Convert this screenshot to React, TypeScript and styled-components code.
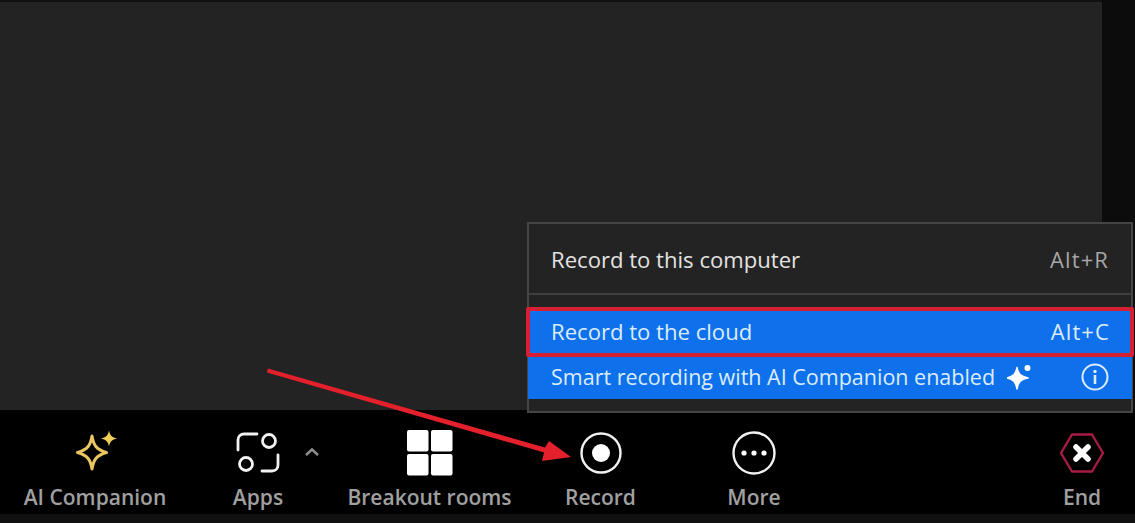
import React from 'react';
import styled, { createGlobalStyle } from 'styled-components';

const GlobalStyle = createGlobalStyle`
    html, body {
        margin: 0;
        padding: 0;
        background: #000;
        font-family: "Open Sans", "Noto Sans", "Liberation Sans", sans-serif;
    }
`;

const Page = styled.div`
    position: relative;
    width: 1135px;
    height: 523px;
    overflow: hidden;
    display: flex;
    flex-direction: column;
    background: #0b0b0b;
`;

const MeetingArea = styled.div`
    height: 410px;
    display: flex;
    padding-top: 2px;
    box-sizing: border-box;
    background: #111;
`;

const Stage = styled.div`
    flex: 1;
    background: #232323;
`;

const Gutter = styled.div`
    width: 33px;
    margin-top: -2px;
    background: #0c0c0c;
`;

const Toolbar = styled.div`
    height: 104px;
    display: flex;
    background: #000;
`;

const BottomStrip = styled.div`
    flex: 1;
    background: #101010;
`;

const ToolButton = styled.div<{ $width: number; $end?: boolean }>`
    position: relative;
    width: ${({ $width }) => $width}px;
    margin-left: ${({ $end }) => ($end ? 'auto' : '0')};
    display: flex;
    flex-direction: column;
    align-items: center;
    padding-top: 19px;
    box-sizing: border-box;
`;

const IconSlot = styled.div`
    width: 52px;
    height: 48px;
    display: flex;
    align-items: center;
    justify-content: center;
`;

const ToolLabel = styled.span`
    margin-top: 5px;
    font-size: 21px;
    line-height: 30px;
    font-weight: 600;
    color: #a0a0a0;
    white-space: nowrap;
`;

const Caret = styled.svg`
    position: absolute;
    top: 36px;
    right: 6px;
`;

const Menu = styled.div`
    position: absolute;
    left: 527px;
    top: 222px;
    width: 606px;
    height: 191px;
    box-sizing: border-box;
    display: flex;
    flex-direction: column;
    background: #232323;
    border: 2px solid #454545;
`;

const MenuRow = styled.div`
    height: 71px;
    flex-shrink: 0;
    display: flex;
    align-items: center;
    justify-content: space-between;
    box-sizing: border-box;
    padding: 0 22px;
    border-bottom: 2px solid #3f3f3f;
`;

const MenuText = styled.span`
    font-size: 22.1px;
    line-height: 28px;
    color: #e2e2e2;
    white-space: nowrap;
`;

const Shortcut = styled.span<{ $light?: boolean }>`
    font-size: 22px;
    letter-spacing: 1.1px;
    line-height: 28px;
    color: ${({ $light }) => ($light ? '#dcecff' : '#a6a6a6')};
    white-space: nowrap;
`;

const CloudRow = styled.div`
    margin: 12px -3px 0 -3px;
    height: 50px;
    flex-shrink: 0;
    box-sizing: border-box;
    display: flex;
    align-items: center;
    justify-content: space-between;
    padding: 0 20px 2px 21px;
    background: #0e71eb;
    border: 4px solid #d61f33;
    border-radius: 2px;
    position: relative;
`;

const SmartRow = styled.div`
    height: 42px;
    flex-shrink: 0;
    box-sizing: border-box;
    display: flex;
    align-items: center;
    gap: 12px;
    background: #0e71eb;
    margin: 0 -1px;
    padding: 0 23px 2px;
`;

const LightText = styled.span<{ $size: number }>`
    font-size: ${({ $size }) => $size}px;
    line-height: 28px;
    color: #dcecff;
    white-space: nowrap;
`;

const InfoIcon = styled.svg`
    margin-left: auto;
`;

const ArrowOverlay = styled.svg`
    position: absolute;
    left: 0;
    top: 0;
    pointer-events: none;
`;

const App: React.FC = () => (
    <>
        <GlobalStyle />
        <Page>
            <MeetingArea>
                <Stage />
                <Gutter />
            </MeetingArea>
            <Toolbar>
                <ToolButton $width={190}>
                    <IconSlot>
                        <svg width="48" height="48" viewBox="0 0 48 48" fill="none">
                            <path d="M21 7 C22.500 16 25 20.500 35.500 23.500 C25 26.500 22.500 31 21 40 C19.500 31 17 26.500 6.500 23.500 C17 20.500 19.500 16 21 7 Z" stroke="#e9c662" strokeWidth="3" strokeLinejoin="round" />
                            <path d="M38 1.500 C39 6.500 41 8.500 46 9.500 C41 10.500 39 12.500 38 17.500 C37 12.500 35 10.500 30 9.500 C35 8.500 37 6.500 38 1.500 Z" fill="#f2cf5b" />
                        </svg>
                    </IconSlot>
                    <ToolLabel>AI Companion</ToolLabel>
                </ToolButton>
                <ToolButton $width={136}>
                    <IconSlot>
                        <svg width="48" height="48" viewBox="0 0 48 48" fill="none" stroke="#f2f2f2" strokeWidth="2.800" strokeLinecap="round">
                            <circle cx="35" cy="12" r="6.500" />
                            <circle cx="12" cy="35" r="6.500" />
                            <path d="M23 5 H10 C6.500 5 4 7.500 4 11 V21" />
                            <path d="M44 26 V36 C44 39.500 41.500 42 38 42 H28" />
                        </svg>
                    </IconSlot>
                    <ToolLabel>Apps</ToolLabel>
                    <Caret width="16" height="12" viewBox="0 0 16 12" fill="none">
                        <path d="M2 9 L8 3.500 L14 9" stroke="#8f8f8f" strokeWidth="2.400" />
                    </Caret>
                </ToolButton>
                <ToolButton $width={207}>
                    <IconSlot>
                        <svg width="46" height="46" viewBox="0 0 46 46" fill="#fff">
                            <rect x="0" y="0" width="21.500" height="21.500" rx="2" />
                            <rect x="24" y="0" width="21.500" height="21.500" rx="2" />
                            <rect x="0" y="24" width="21.500" height="21.500" rx="2" />
                            <rect x="24" y="24" width="21.500" height="21.500" rx="2" />
                        </svg>
                    </IconSlot>
                    <ToolLabel>Breakout rooms</ToolLabel>
                </ToolButton>
                <ToolButton $width={135}>
                    <IconSlot>
                        <svg width="44" height="44" viewBox="0 0 44 44" fill="none">
                            <circle cx="22" cy="22" r="19.500" stroke="#f2f2f2" strokeWidth="2.400" />
                            <circle cx="22" cy="22" r="9" fill="#fff" />
                        </svg>
                    </IconSlot>
                    <ToolLabel>Record</ToolLabel>
                </ToolButton>
                <ToolButton $width={172}>
                    <IconSlot>
                        <svg width="46" height="46" viewBox="0 0 46 46" fill="none">
                            <circle cx="23" cy="23" r="20.500" stroke="#f2f2f2" strokeWidth="2.400" />
                            <circle cx="13" cy="23" r="2.600" fill="#fff" />
                            <circle cx="23" cy="23" r="2.600" fill="#fff" />
                            <circle cx="33" cy="23" r="2.600" fill="#fff" />
                        </svg>
                    </IconSlot>
                    <ToolLabel>More</ToolLabel>
                </ToolButton>
                <ToolButton $width={106} $end>
                    <IconSlot>
                        <svg width="46" height="46" viewBox="0 0 46 46" fill="none">
                            <path d="M13 4.500 H33 L44 23 L33 41.500 H13 L2 23 Z" stroke="#a81c43" strokeWidth="2.400" strokeLinejoin="round" />
                            <path d="M17 17 L29 29 M29 17 L17 29" stroke="#fff" strokeWidth="5.500" strokeLinecap="round" />
                        </svg>
                    </IconSlot>
                    <ToolLabel>End</ToolLabel>
                </ToolButton>
            </Toolbar>
            <BottomStrip />

            <Menu>
                <MenuRow>
                    <MenuText>Record to this computer</MenuText>
                    <Shortcut>Alt+R</Shortcut>
                </MenuRow>
                <CloudRow>
                    <LightText $size={22.1}>Record to the cloud</LightText>
                    <Shortcut $light>Alt+C</Shortcut>
                </CloudRow>
                <SmartRow>
                    <LightText $size={21.5}>Smart recording with AI Companion enabled</LightText>
                    <svg width="24" height="28" viewBox="0 0 24 28" fill="#fff">
                        <path d="M10 4.500 C11 11 13.500 13.500 21 15 C13.500 16.500 11 19 10 26 C9 19 6.500 16.500 0 15 C6.500 13.500 9 11 10 4.500 Z" stroke="#fff" strokeWidth="1.600" strokeLinejoin="round" />
                        <circle cx="20.500" cy="5" r="3" />
                    </svg>
                    <InfoIcon width="28" height="28" viewBox="0 0 28 28" fill="none">
                        <circle cx="14" cy="14" r="12.500" stroke="#dcecff" strokeWidth="2" />
                        <circle cx="14" cy="8.500" r="1.700" fill="#dcecff" />
                        <path d="M14 12 V21" stroke="#dcecff" strokeWidth="2.600" />
                    </InfoIcon>
                </SmartRow>
            </Menu>

            <ArrowOverlay width="1135" height="523" viewBox="0 0 1135 523">
                <path d="M268 368.500 L545 447.500 L549 441 L571 457 L542 461 L544 452.500 L267 372.500 Z" fill="#e3202b" />
            </ArrowOverlay>
        </Page>
    </>
);

export default App;
